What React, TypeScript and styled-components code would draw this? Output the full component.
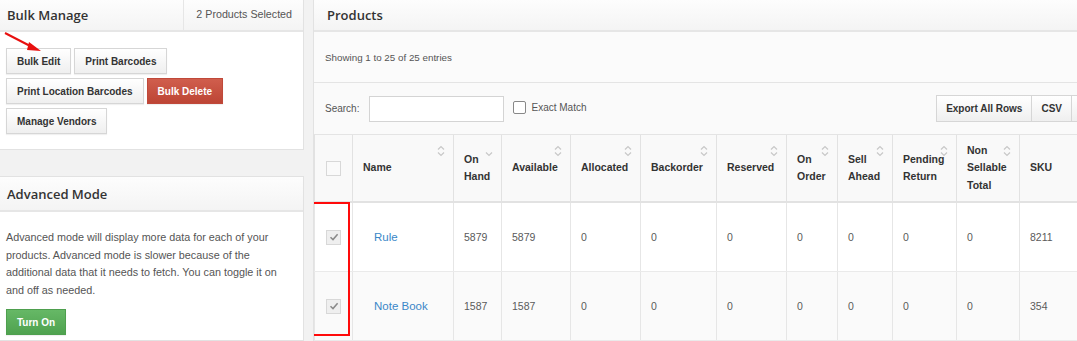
import React from "react";
import styled, { createGlobalStyle } from "styled-components";

const GlobalStyle = createGlobalStyle`
  html, body {
    margin: 0;
    padding: 0;
    background: #f2f2f2;
    font-family: "Liberation Sans", Arial, sans-serif;
    -webkit-font-smoothing: antialiased;
    overflow: hidden;
  }
`;

const columns = [
  { key: "name", label: ["Name"], width: 101, sort: "both" },
  { key: "onHand", label: ["On", "Hand"], width: 48, sort: "down" },
  { key: "available", label: ["Available"], width: 69, sort: "both" },
  { key: "allocated", label: ["Allocated"], width: 70, sort: "both" },
  { key: "backorder", label: ["Backorder"], width: 76, sort: "both" },
  { key: "reserved", label: ["Reserved"], width: 70, sort: "both" },
  { key: "onOrder", label: ["On", "Order"], width: 51, sort: "both" },
  { key: "sellAhead", label: ["Sell", "Ahead"], width: 55, sort: "both" },
  { key: "pending", label: ["Pending", "Return"], width: 64, sort: "both" },
  { key: "nonSellable", label: ["Non", "Sellable", "Total"], width: 63, sort: "both" },
  { key: "sku", label: ["SKU"], width: 90, sort: "none" },
];

const products = [
  { name: "Rule", onHand: 5879, available: 5879, sku: "8211" },
  { name: "Note Book", onHand: 1587, available: 1587, sku: "354" },
];

const SortIcon = ({ dir }: { dir: string }) => {
  if (dir === "none") return null;
  return (
    <SortMark width="8" height="12" viewBox="0 0 8 12">
      {dir === "both" && (
        <path d="M1 4.5 L4 1.5 L7 4.5" fill="none" stroke="#c8c8c8" strokeWidth="1.2" />
      )}
      <path d="M1 7.5 L4 10.5 L7 7.5" fill="none" stroke="#c8c8c8" strokeWidth="1.2" />
    </SortMark>
  );
};

const CheckBox = ({ checked }: { checked?: boolean }) => (
  <Box $checked={checked}>
    {checked && (
      <svg width="10" height="10" viewBox="0 0 10 10">
        <path d="M1.5 5.2 L4 7.6 L8.6 2.2" fill="none" stroke="#8a8a8a" strokeWidth="1.5" />
      </svg>
    )}
  </Box>
);

const App = () => {
  return (
    <>
      <GlobalStyle />
      <Page>
        <LeftColumn>
          <Panel>
            <PanelHeader>
              <PanelTitle>Bulk Manage</PanelTitle>
              <Selected>2 Products Selected</Selected>
            </PanelHeader>
            <ButtonArea>
              <ButtonRow>
                <Btn>Bulk Edit</Btn>
                <Btn>Print Barcodes</Btn>
              </ButtonRow>
              <ButtonRow>
                <Btn>Print Location Barcodes</Btn>
                <Btn $variant="danger">Bulk Delete</Btn>
              </ButtonRow>
              <ButtonRow>
                <Btn>Manage Vendors</Btn>
              </ButtonRow>
            </ButtonArea>
            <Arrow width="44" height="26" viewBox="0 0 44 26">
              <line x1="1" y1="1" x2="30" y2="16" stroke="#e8100f" strokeWidth="2" />
              <path d="M25 10 L37 19 L23 18 Z" fill="#e8100f" />
            </Arrow>
          </Panel>
          <Panel $grow>
            <PanelHeader $tall>
              <PanelTitle>Advanced Mode</PanelTitle>
            </PanelHeader>
            <AdvancedBody>
              <Description>
                Advanced mode will display more data for each of your products. Advanced mode is
                slower because of the additional data that it needs to fetch. You can toggle it on
                and off as needed.
              </Description>
              <Btn $variant="success">Turn On</Btn>
            </AdvancedBody>
          </Panel>
        </LeftColumn>

        <RightPanel>
          <PanelHeader>
            <PanelTitle $strong>Products</PanelTitle>
          </PanelHeader>
          <InfoRow>Showing 1 to 25 of 25 entries</InfoRow>
          <Toolbar>
            <SearchLabel>Search:</SearchLabel>
            <SearchInput />
            <ExactMatch>
              <MiniBox />
              Exact Match
            </ExactMatch>
            <ExportGroup>
              <GroupBtn>Export All Rows</GroupBtn>
              <GroupBtn>CSV</GroupBtn>
              <GroupBtn $blank />
            </ExportGroup>
          </Toolbar>
          <TableWrap>
            <Table>
              <colgroup>
                <col style={{ width: 38 }} />
                {columns.map((c) => (
                  <col key={c.key} style={{ width: c.width }} />
                ))}
              </colgroup>
              <thead>
                <tr>
                  <Th $center>
                    <CheckBox />
                  </Th>
                  {columns.map((c) => (
                    <Th key={c.key}>
                      {c.label.map((l) => (
                        <div key={l}>{l}</div>
                      ))}
                      <SortIcon dir={c.sort} />
                    </Th>
                  ))}
                </tr>
              </thead>
              <tbody>
                {products.map((p, i) => (
                  <Row key={p.name} $odd={i % 2 === 1}>
                    <Td $center>
                      <CheckBox checked />
                    </Td>
                    <Td>
                      <NameLink>{p.name}</NameLink>
                    </Td>
                    <Td>{p.onHand}</Td>
                    <Td>{p.available}</Td>
                    <Td>0</Td>
                    <Td>0</Td>
                    <Td>0</Td>
                    <Td>0</Td>
                    <Td>0</Td>
                    <Td>0</Td>
                    <Td>0</Td>
                    <Td>{p.sku}</Td>
                  </Row>
                ))}
              </tbody>
            </Table>
            <Highlight />
          </TableWrap>
        </RightPanel>
      </Page>
    </>
  );
};

const Page = styled.div`
  display: flex;
  gap: 9px;
  height: 341px;
  overflow: hidden;
`;

const LeftColumn = styled.div`
  width: 304px;
  flex-shrink: 0;
  display: flex;
  flex-direction: column;
  gap: 26px;
`;

const Panel = styled.div<{ $grow?: boolean }>`
  position: relative;
  background: #fff;
  border-right: 1px solid #e2e2e2;
  border-bottom: 1px solid #e2e2e2;
  ${(p) => p.$grow && "flex: 1; border-top: 1px solid #e2e2e2;"}
`;

const PanelHeader = styled.div<{ $tall?: boolean }>`
  display: flex;
  align-items: center;
  flex-shrink: 0;
  height: ${(p) => (p.$tall ? "33px" : "30px")};
  background: linear-gradient(#fdfdfd, #f4f4f4);
  border-bottom: 2px solid #e6e6e6;
`;

const PanelTitle = styled.div<{ $strong?: boolean }>`
  flex: 1;
  padding-left: ${(p) => (p.$strong ? "13px" : "7px")};
  font-family: "Open Sans", sans-serif;
  font-size: 13px;
  font-weight: 600;
  color: #333;
`;

const Selected = styled.div`
  align-self: stretch;
  display: flex;
  align-items: center;
  padding: 0 11px 0 12px;
  border-left: 1px solid #e6e6e6;
  font-size: 10.7px;
  color: #555;
  margin-top: -2px;
`;

const ButtonArea = styled.div`
  display: flex;
  flex-direction: column;
  gap: 4px;
  padding: 16px 6px 15px;
`;

const ButtonRow = styled.div`
  display: flex;
  gap: 3px;
`;

const Btn = styled.button<{ $variant?: "danger" | "success" }>`
  height: 26px;
  padding: 0 10px;
  font-family: "Liberation Sans", Arial, sans-serif;
  font-size: 10px;
  font-weight: bold;
  border-radius: 0;
  cursor: pointer;
  color: ${(p) => (p.$variant ? "#fff" : "#333")};
  border: 1px solid
    ${(p) => (p.$variant === "danger" ? "#c0493a" : p.$variant === "success" ? "#4e9f4e" : "#d6d6d6")};
  background: ${(p) =>
    p.$variant === "danger"
      ? "linear-gradient(#d05e4d, #bd4535)"
      : p.$variant === "success"
      ? "linear-gradient(#66b866, #4fa24f)"
      : "linear-gradient(#ffffff, #efefef)"};
  box-shadow: 0 1px 1px rgba(0, 0, 0, 0.06);
`;

const Arrow = styled.svg`
  position: absolute;
  left: 4px;
  top: 32px;
`;

const AdvancedBody = styled.div`
  padding: 17px 6px 0 6px;
`;

const Description = styled.p`
  margin: 0 0 10px;
  font-size: 10.8px;
  line-height: 17.6px;
  color: #555;
`;

const RightPanel = styled.div`
  flex: 1;
  min-width: 0;
  background: #fafafa;
  border-left: 1px solid #e2e2e2;
  display: flex;
  flex-direction: column;
  overflow: hidden;
`;

const InfoRow = styled.div`
  height: 50px;
  flex-shrink: 0;
  display: flex;
  align-items: center;
  padding-left: 11px;
  font-size: 9.8px;
  color: #555;
  border-bottom: 1px solid #e4e4e4;
  background: #fbfbfb;
`;

const Toolbar = styled.div`
  height: 51px;
  flex-shrink: 0;
  display: flex;
  align-items: center;
  padding-left: 11px;
  font-size: 10px;
  color: #555;
`;

const SearchLabel = styled.span`
  margin-right: 10px;
`;

const SearchInput = styled.input`
  width: 135px;
  height: 26px;
  padding: 0;
  border: 1px solid #d4d4d4;
  background: #fff;
  box-sizing: border-box;
`;

const ExactMatch = styled.label`
  display: flex;
  align-items: center;
  gap: 5px;
  margin-left: 9px;
  margin-top: -3px;
`;

const MiniBox = styled.span`
  width: 11px;
  height: 11px;
  border: 1px solid #888;
  border-radius: 2px;
  background: #fff;
`;

const ExportGroup = styled.div`
  display: flex;
  margin-left: auto;
  margin-right: -25px;
`;

const GroupBtn = styled.button<{ $blank?: boolean }>`
  height: 27px;
  width: ${(p) => (p.$blank ? "31px" : "auto")};
  padding: 0 9px;
  font-family: "Liberation Sans", Arial, sans-serif;
  font-size: 10px;
  font-weight: bold;
  color: #333;
  border: 1px solid #d6d6d6;
  margin-left: -1px;
  background: linear-gradient(#ffffff, #efefef);
`;

const TableWrap = styled.div`
  position: relative;
  border-top: 1px solid #e4e4e4;
`;

const Table = styled.table`
  table-layout: fixed;
  border-collapse: collapse;
  width: 795px;
`;

const Th = styled.th<{ $center?: boolean }>`
  position: relative;
  height: 66px;
  padding: 0 ${(p) => (p.$center ? "0" : "10px")};
  text-align: ${(p) => (p.$center ? "center" : "left")};
  font-size: 10.5px;
  font-weight: bold;
  line-height: 17.5px;
  color: #333;
  background: #f9f9f9;
  border-left: 1px solid #e2e2e2;
  border-right: 1px solid #e2e2e2;
  border-bottom: 2px solid #e2e2e2;
  vertical-align: middle;
  & > div {
    white-space: nowrap;
  }
`;

const SortMark = styled.svg`
  position: absolute;
  top: 10px;
  right: 8px;
`;

const Row = styled.tr<{ $odd?: boolean }>`
  background: ${(p) => (p.$odd ? "#fafafa" : "#fff")};
`;

const Td = styled.td<{ $center?: boolean }>`
  height: 68px;
  padding: 0 ${(p) => (p.$center ? "0" : "10px")};
  text-align: ${(p) => (p.$center ? "center" : "left")};
  font-size: 10.5px;
  color: #5a5a5a;
  border-left: 1px solid #e6e6e6;
  border-right: 1px solid #e6e6e6;
  border-bottom: 1px solid #eaeaea;
`;

const NameLink = styled.a`
  padding-left: 11px;
  font-size: 11.5px;
  color: #3a87c8;
`;

const Box = styled.span<{ $checked?: boolean }>`
  display: inline-flex;
  align-items: center;
  justify-content: center;
  width: 13px;
  height: 13px;
  vertical-align: middle;
  border: 1px solid #d8d8d8;
  background: ${(p) => (p.$checked ? "#efefef" : "#fafafa")};
`;

const Highlight = styled.div`
  position: absolute;
  left: -2px;
  top: 67px;
  width: 34px;
  height: 130px;
  border: 2px solid #ff0a0a;
`;

export default App;
